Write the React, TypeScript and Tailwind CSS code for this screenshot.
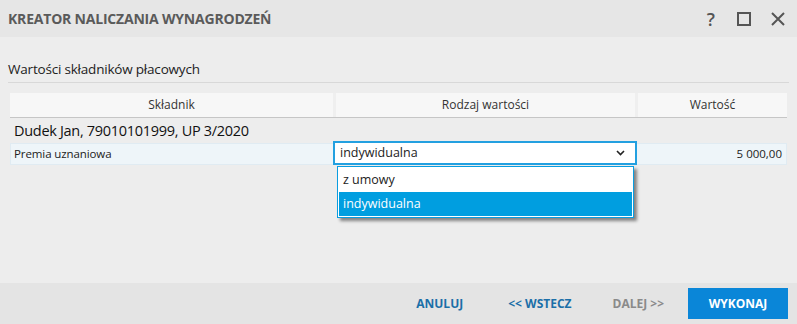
import React from "react";

const font = { fontFamily: '"Open Sans", "Noto Sans", sans-serif' };

export default function App() {
  return (
    <div
      className="w-[797px] h-[324px] flex flex-col bg-[#ededed] text-[#222] overflow-hidden"
      style={font}
    >
      {/* Title bar */}
      <div className="h-[37px] shrink-0 bg-[#e6e6e6] flex items-center justify-between pl-[8px] pr-[12px]">
        <div className="text-[14px] font-bold text-[#5a5a5a] tracking-[-0.2px]">
          KREATOR NALICZANIA WYNAGRODZEŃ
        </div>
        <div className="flex items-center gap-[20px] text-[#555]">
          <span className="text-[18px] leading-none font-semibold mr-[2px]">?</span>
          <svg width="14" height="14" viewBox="0 0 14 14">
            <rect x="1" y="1" width="12" height="12" fill="none" stroke="#555" strokeWidth="2" />
          </svg>
          <svg width="14" height="14" viewBox="0 0 14 14">
            <path d="M1 1 L13 13 M13 1 L1 13" stroke="#555" strokeWidth="2" />
          </svg>
        </div>
      </div>

      {/* Body */}
      <div className="flex-1 relative px-[8px] pt-[22px]">
        <div className="border-b border-[#d8d8d8] pb-[3px] h-[24px] text-[13.5px] leading-[20px] tracking-[-0.2px]">
          Wartości składników płacowych
        </div>

        <div className="mt-[10px] ml-[2px] w-[777px]">
          {/* Header */}
          <div className="flex h-[25px] bg-[#f7f7f7] border-b border-[#c6c6c6] text-[12px] text-[#333]">
            <div className="w-[323px] flex items-center justify-center">Składnik</div>
            <div className="w-[302px] flex items-center justify-center border-l-[3px] border-[#efefef]">
              Rodzaj wartości
            </div>
            <div className="flex-1 flex items-center justify-center border-l-[3px] border-[#efefef]">
              Wartość
            </div>
          </div>

          <div className="mt-[3px] h-[21px] pl-[4px] text-[14.5px] leading-[20px] tracking-[-0.3px] text-[#111]">
            Dudek Jan, 79010101999, UP 3/2020
          </div>

          {/* Row */}
          <div className="relative flex h-[22px] mt-[1px] bg-[#eef5f9] border border-[#e0ebf2] text-[11.5px]">
            <div className="w-[322px] flex items-center pl-[3px] tracking-[-0.1px]">Premia uznaniowa</div>
            <div className="w-[304px] relative">
              <div className="absolute left-0 right-0 top-[-3px] h-[24px] bg-white border-2 border-[#23a0e0] flex items-center justify-between pl-[5px] pr-[10px] text-[12.5px]">
                <span>indywidualna</span>
                <svg width="9" height="6" viewBox="0 0 9 6">
                  <path d="M1 1 L4.5 4.5 L8 1" stroke="#222" strokeWidth="1.6" fill="none" />
                </svg>
              </div>
            </div>
            <div className="flex-1 flex items-center justify-end pr-[4px]">5 000,00</div>
          </div>
        </div>

        {/* Dropdown */}
        <div className="absolute left-[337px] top-[129px] w-[297px] h-[52px] bg-white border border-[#0a9de0] p-[1px] shadow-[3px_3px_3px_rgba(0,0,0,0.45)] text-[12.5px] flex flex-col">
          <div className="h-[24px] flex items-center pl-[4px]">z umowy</div>
          <div className="flex-1 flex items-center pl-[4px] bg-[#009ee0] text-white">indywidualna</div>
        </div>
      </div>

      {/* Footer */}
      <div className="h-[41px] shrink-0 bg-[#e4e4e4] flex items-center justify-end pr-[9px] text-[12px] font-bold">
        <span className="text-[#1b6fa8] mr-[45px]">ANULUJ</span>
        <span className="text-[#1b6fa8] mr-[41px]">&lt;&lt; WSTECZ</span>
        <span className="text-[#8a8a8a] mr-[24px]">DALEJ &gt;&gt;</span>
        <div className="w-[100px] h-[31px] bg-[#0a86d8] text-white flex items-center justify-center">
          WYKONAJ
        </div>
      </div>
    </div>
  );
}
